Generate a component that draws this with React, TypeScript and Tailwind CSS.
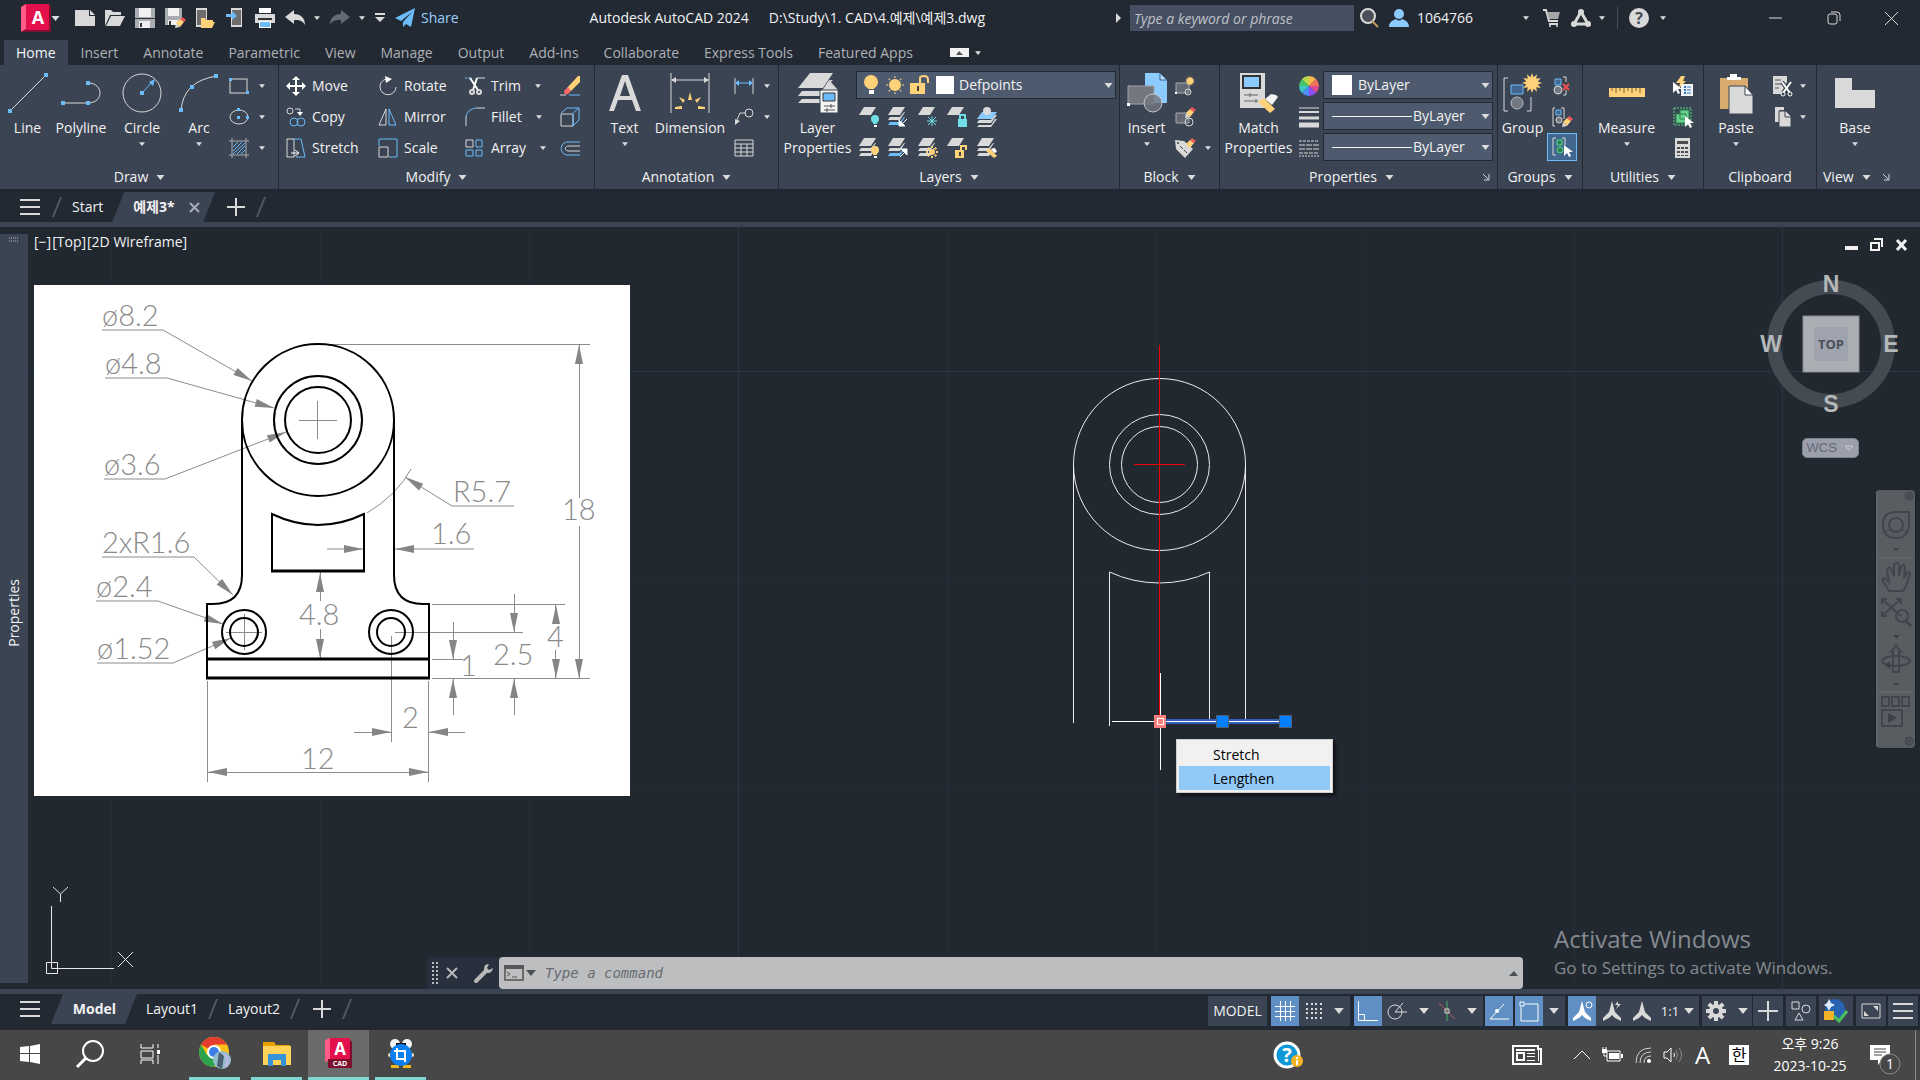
import React from "react";

type Kids = { children?: React.ReactNode };

function Svg({ w = 20, h = 20, vb, children, className = "" }: Kids & { w?: number; h?: number; vb?: string; className?: string }) {
  return (
    <svg width={w} height={h} viewBox={vb ?? `0 0 ${w} ${h}`} fill="none" aria-hidden="true" className={`shrink-0 overflow-visible ${className}`}>
      {children}
    </svg>
  );
}

function Caret({ w = 7, h = 4, className = "" }: { w?: number; h?: number; className?: string }) {
  return (
    <Svg w={w} h={h} vb="0 0 8 5" className={className}>
      <path d="M0 0H8L4 5Z" fill="#dcdcdc" />
    </Svg>
  );
}

const L = "#d9d9d9";
const B = "#6cbcfa";
const Y = "#ffd27a";

/* ---------- shared icon fragments ---------- */

const Sheet = ({ x, y, fill = L }: { x: number; y: number; fill?: string }) => (
  <path d={`M${x + 5} ${y}h12l-5 8H${x}z`} fill={fill} />
);

const SmallStack = ({ mid = L, low = L }: { mid?: string; low?: string }) => (
  <>
    <Sheet x={0} y={0} />
    <path d="M2 10L0 13H12L17 5H16L12 10Z" fill={mid} />
    <path d="M2 15L0 18H12L17 10H16L12 15Z" fill={low} />
  </>
);

const Bulb = ({ x, y, fill }: { x: number; y: number; fill: string }) => (
  <>
    <circle cx={x} cy={y} r="4" fill={fill} />
    <path d={`M${x - 2} ${y + 3}h4v2h-4z`} fill={fill} />
    <path d={`M${x - 1} ${y + 6}h3v2h-3z`} fill="#fff" />
  </>
);

const Pencil = ({ x, y }: { x: number; y: number }) => (
  <>
    <path d={`M${x - 1} ${y + 10}l1-5 4 4z`} fill={L} />
    <path d={`M${x} ${y + 5}l4-4 4 3-4 5z`} fill={Y} />
    <path d={`M${x + 4} ${y + 1}l2-2 4 3-2 2z`} fill="#f25b5b" />
  </>
);

const Cursor = ({ x, y }: { x: number; y: number }) => (
  <path d={`M${x} ${y}v11l3-3 2 4 2-1-2-4h4z`} fill="#fff" />
);

const Sun = ({ x, y, r, s }: { x: number; y: number; r: number; s: number }) => (
  <g stroke={Y} strokeWidth={r > 4 ? 1 : 2}>
    <circle cx={x} cy={y} r={r} fill={Y} stroke="none" />
    {[0, 45, 90, 135, 180, 225, 270, 315].map((a) => (
      <path key={a} d={`M${x} ${y - r - 1}v${-s}`} transform={`rotate(${a} ${x} ${y})`} />
    ))}
  </g>
);

const starPath =
  "M" +
  Array.from({ length: 24 }, (_, i) => {
    const r = i % 2 ? 6 : 10;
    const a = (i * Math.PI) / 12;
    return `${(r * Math.sin(a)).toFixed(1)} ${(-r * Math.cos(a)).toFixed(1)}`;
  }).join("L") +
  "Z";

const Star = ({ x, y, k }: { x: number; y: number; k: number }) => (
  <path transform={`translate(${x} ${y}) scale(${k})`} d={starPath} fill={Y} />
);

const Dot = ({ x, y }: { x: number; y: number }) => <rect x={x - 2} y={y - 2} width="4" height="4" fill={B} />;

/* ---------- title bar ---------- */

function IconButton({ label, className = "", children }: Kids & { label: string; className?: string }) {
  return (
    <button type="button" aria-label={label} className={`flex shrink-0 items-center justify-center ${className}`}>
      {children}
    </button>
  );
}

function TitleBar() {
  return (
    <header className="flex h-10 items-start">
      <div className="flex h-9 items-center pl-[18px] text-[#9bd0fb]">
        <IconButton label="Application menu" className="w-[44px] justify-between">
          <Svg w={30} h={28}>
            <path d="M0 3L5 0V26L0 28Z" fill="#ff5b86" />
            <path d="M5 0H28V26H5Z" fill="#e3104c" />
            <path d="M5 26H28V1L30 2V28H0L5 25Z" fill="#7c1131" />
            <text x="17" y="20" textAnchor="middle" fontSize="18" fontWeight="700" fill="#fff" fontFamily="Open Sans, sans-serif">A</text>
          </Svg>
          <Caret w={9} h={5} />
        </IconButton>
        <div className="ml-[13px] flex items-center gap-[10px]">
          <IconButton label="New"><Svg><path d="M0 2H14V8H20V18H0Z" fill={L} /><path d="M15 2L20 7H15Z" fill={L} /></Svg></IconButton>
          <IconButton label="Open"><Svg><path d="M0 18V2H6L8 4H16V7H5Z" fill={L} /><path d="M6 8H20L15 18H1Z" fill={L} /></Svg></IconButton>
          <IconButton label="Save"><Svg><path d="M0 0H20V20H0Z" fill="#a9acb0" /><path d="M4 0H16V9H4ZM4 13H15V20H4Z" fill="#f1f1f1" /><path d="M5 15h2v4H5zM0 10h20v1H0z" fill="#333" /></Svg></IconButton>
          <IconButton label="Save as"><Svg><path d="M0 0H17V17H0Z" fill="#a9acb0" /><path d="M3 0H14V8H3ZM3 12H13V17H3Z" fill="#f1f1f1" /><path d="M4 13h2v4H4z" fill="#333" /><Pencil x={11} y={10} /></Svg></IconButton>
          <IconButton label="Open from mobile"><Svg><path d="M1 0H12V19H1Z" fill={L} /><path d="M2 2H11V17H2Z" fill="#6d6d6d" /><path d="M6 10H10L11 12H18V14H20L17 20H6Z" fill={Y} /></Svg></IconButton>
          <IconButton label="Save to mobile"><Svg><path d="M6 0H17V19H6Z" fill={L} /><path d="M7 2H16V17H7Z" fill="#6d6d6d" /><path d="M1 6H7V3L12 8 7 12V9H1Z" fill={B} /></Svg></IconButton>
          <IconButton label="Plot"><Svg><path d="M4 0H16V5H4Z" fill="#fff" /><path d="M0 6H20V15H0Z" fill={L} /><path d="M3 10H17V12H3Z" fill="#333" /><path d="M4 13H16V20H4Z" fill="#fff" /><path d="M5 14H15V19H5Z" fill="#6cbcfa" /></Svg></IconButton>
          <IconButton label="Undo"><Svg><path d="M0 9L9 2V6C16 6 20 10 20 17 17 12 14 12 9 12V16Z" fill={L} /></Svg></IconButton>
        </div>
        <Caret w={6} className="ml-[9px]" />
        <IconButton label="Redo" className="ml-[10px]"><Svg><path d="M20 9L11 2V6C4 6 0 10 0 17 3 12 6 12 11 12V16Z" fill="#636a75" /></Svg></IconButton>
        <Caret w={6} className="ml-[9px]" />
        <IconButton label="Customize" className="ml-[10px]"><Svg w={10} h={10}><path d="M0 0H10V2H0ZM0 4H10L5 9Z" fill={L} /></Svg></IconButton>
        <button type="button" className="ml-[10px] flex items-center gap-[6px] text-sm">
          <Svg><path d="M20 0L0 10 6 13 17 4 8 14V19L11 16 16 19Z" fill={B} /></Svg>
          Share
        </button>
      </div>
      <h1 className="flex-1 text-center text-sm leading-9 text-[#f2f2f2]">
        Autodesk AutoCAD 2024<span className="inline-block w-5" />D:\Study\1. CAD\4.예제\예제3.dwg
      </h1>
      <div className="flex h-9 items-center pr-[22px] text-[#f2f2f2]">
        <Svg w={5} h={10}><path d="M0 0L5 5 0 10Z" fill={L} /></Svg>
        <input
          aria-label="Search"
          placeholder="Type a keyword or phrase"
          className="ml-[9px] h-[26px] w-56 bg-[#464e61] px-1 text-sm italic placeholder:text-[#bfc2c8]"
        />
        <IconButton label="Find" className="ml-[5px]"><Svg><circle cx="9" cy="8" r="7" fill="#4a5059" stroke={L} strokeWidth="2" /><path d="M13 13L19 19" stroke="#c59a63" strokeWidth="2" /></Svg></IconButton>
        <button type="button" className="ml-[10px] flex items-center gap-2 text-sm">
          <Svg><circle cx="10" cy="6" r="5" fill="#8ccbff" /><path d="M0 19C0 14 4 12 7 11 9 13 11 13 13 11 16 12 20 14 20 19Z" fill="#8ccbff" /></Svg>
          <span className="w-[98px] text-left">1064766</span>
          <Caret w={6} />
        </button>
        <IconButton label="App store" className="ml-[14px]"><Svg w={18} h={18}><path d="M0 1H3L6 12H15M6 15H15" stroke={L} strokeWidth="2" /><path d="M4 3H17L15 10H6Z" fill="#a5a5a5" /><circle cx="7" cy="17" r="1" fill={L} /><circle cx="14" cy="17" r="1" fill={L} /></Svg></IconButton>
        <IconButton label="Autodesk account" className="ml-[10px]"><Svg><path d="M10 4L3 16H17Z" stroke={L} strokeWidth="3" /><circle cx="10" cy="4" r="3" fill={L} /><circle cx="3" cy="16" r="3" fill={L} /><circle cx="17" cy="16" r="3" fill={L} /></Svg></IconButton>
        <Caret w={6} className="ml-2" />
        <span className="ml-[12px] h-[22px] w-px bg-[#474f5e]" />
        <IconButton label="Help" className="ml-[11px]">
          <Svg w={21} h={20}><circle cx="10" cy="10" r="10" fill={L} /><text x="10" y="16" textAnchor="middle" fontSize="16" fontWeight="700" fill="#454b55" fontFamily="Open Sans, sans-serif">?</text></Svg>
        </IconButton>
        <Caret w={6} className="ml-[10px]" />
        <IconButton label="Minimize" className="ml-[103px]"><Svg w={13} h={13}><path d="M0 6H13" stroke={L} /></Svg></IconButton>
        <IconButton label="Restore" className="ml-[45px]"><Svg w={14} h={14}><rect x="1" y="3" width="9" height="10" rx="2" stroke={L} /><path d="M4 1H10Q13 1 13 4V10" stroke={L} /></Svg></IconButton>
        <IconButton label="Close" className="ml-[44px]"><Svg w={13} h={13}><path d="M0 0L13 13M13 0L0 13" stroke={L} /></Svg></IconButton>
      </div>
    </header>
  );
}

const ribbonTabs = ["Home", "Insert", "Annotate", "Parametric", "View", "Manage", "Output", "Add-ins", "Collaborate", "Express Tools", "Featured Apps"];

function RibbonTabs() {
  return (
    <nav className="flex h-[25px] items-stretch gap-px pl-1 text-sm text-[#aeb1b6]">
      {ribbonTabs.map((t, i) => (
        <button key={t} type="button" className={i === 0 ? "bg-[#3b4453] px-3 text-[#f5f5f5]" : "px-3"}>
          {t}
        </button>
      ))}
      <button type="button" aria-label="Ribbon display" className="ml-[24px] flex items-center gap-[6px]">
        <Svg w={19} h={9}><path d="M0 0H19V9H0Z" fill="#f2f2f2" /><path d="M6 7L9 3 13 7Z" fill="#555" /></Svg>
        <Caret w={6} />
      </button>
    </nav>
  );
}

/* ---------- ribbon ---------- */

function Panel({ label, width, caret = true, corner = false, last = false, children }: Kids & { label: string; width: string; caret?: boolean; corner?: boolean; last?: boolean }) {
  return (
    <section className={`flex flex-col ${width} ${last ? "" : "border-r border-[#222933]"}`}>
      <div className="flex h-[100px] pt-[5px]">{children}</div>
      <div className="flex h-6 items-center">
        <button type="button" className={`flex items-center gap-2 ${last ? "pl-[6px]" : "flex-1 justify-center"}`}>
          {label}
          {caret && <Caret w={9} h={5} />}
        </button>
        {corner && (
          <IconButton label={`${label} settings`} className={last ? "ml-3" : "mr-[7px]"}>
            <Svg w={7} h={7}><path d="M0 0L5 5M6 0V6H1" stroke={L} strokeWidth="1" /></Svg>
          </IconButton>
        )}
      </div>
    </section>
  );
}

function Big({ label, width, caret = false, children }: Kids & { label: string; width: string; caret?: boolean }) {
  return (
    <button type="button" className={`flex shrink-0 flex-col items-center pt-[3px] leading-5 ${width}`}>
      <Svg w={40} h={40}>{children}</Svg>
      <span className="mt-[5px] whitespace-pre">{label}</span>
      {caret && <Caret w={6} className="mt-1" />}
    </button>
  );
}

function Tool({ label, caret = false, gap = "gap-[6px]", children }: Kids & { label?: string; caret?: boolean; gap?: string }) {
  return (
    <div className={`flex h-[31px] items-center ${gap}`}>
      <button type="button" aria-label={label ?? "Tool"} className="shrink-0">
        <Svg>{children}</Svg>
      </button>
      {caret && <Caret w={6} />}
    </div>
  );
}

function TextTool({ label, caret = false, children }: Kids & { label: string; caret?: boolean }) {
  return (
    <button type="button" className="flex h-[31px] items-center gap-[6px]">
      <Svg>{children}</Svg>
      {label}
      {caret && <Caret w={6} className="ml-2" />}
    </button>
  );
}

function DrawPanel() {
  return (
    <Panel label="Draw" width="w-[278px]">
      <Big label="Line" width="w-[53px]"><path d="M2 38L38 2" stroke={L} /><Dot x={2} y={38} /><Dot x={38} y={2} /></Big>
      <Big label="Polyline" width="w-[54px]"><path d="M2 30H27M27 10C43 10 43 30 27 30" stroke={L} /><Dot x={2} y={30} /><Dot x={27} y={30} /><Dot x={27} y={10} /></Big>
      <Big label="Circle" width="w-[68px]" caret><circle cx="20" cy="20" r="19" stroke={L} /><path d="M20 20L30 9" stroke={B} /><path d="M33 6L27 9 31 13Z" fill={B} /><Dot x={20} y={20} /></Big>
      <Big label="Arc" width="w-[46px]" caret><path d="M2 38Q4 8 38 3" stroke={L} /><Dot x={2} y={37} /><Dot x={13} y={14} /><Dot x={37} y={3} /></Big>
      <div className="ml-[7px]">
        <Tool label="Rectangle" caret gap="gap-[10px]"><rect x="1" y="3" width="17" height="14" stroke={L} /><rect x="0" y="2" width="3" height="3" fill={B} /><rect x="17" y="15" width="3" height="3" fill={B} /></Tool>
        <Tool label="Ellipse" caret gap="gap-[10px]"><ellipse cx="10" cy="10" rx="9" ry="7" stroke={L} /><rect x="8" y="9" width="3" height="3" fill={B} /><rect x="8" y="1" width="3" height="3" fill={B} /><rect x="17" y="9" width="3" height="3" fill={B} /></Tool>
        <Tool label="Hatch" caret gap="gap-[10px]"><path d="M0 3H20M0 17H20M3 0V20M17 0V20" stroke="#a7abb2" /><path d="M4 9L9 4M4 13L13 4M4 16L16 5M8 16L16 8M12 16L16 12" stroke={B} /></Tool>
      </div>
    </Panel>
  );
}

function ModifyPanel() {
  return (
    <Panel label="Modify" width="w-[316px]">
      <div className="ml-[7px] w-[92px]">
        <TextTool label="Move"><path d="M10 0L14 4H11V9H16V6L20 10 16 14V11H11V16H14L10 20 6 16H9V11H4V14L0 10 4 6V9H9V4H6Z" fill="#fff" /></TextTool>
        <TextTool label="Copy"><circle cx="4" cy="4" r="3" stroke={L} /><path d="M9 2H14V6" stroke={L} /><path d="M11 5H17L14 9Z" fill="#fff" /><circle cx="8" cy="15" r="4" stroke={B} /><circle cx="15" cy="15" r="4" stroke={B} /></TextTool>
        <TextTool label="Stretch"><path d="M1 1H8V19H1Z" stroke={L} /><path d="M8 1H15L19 19H10" stroke={B} /><path d="M5 15H12M9 12L13 15 9 18" stroke="#fff" /></TextTool>
      </div>
      <div className="w-[87px]">
        <TextTool label="Rotate"><path d="M8 3A8 8 0 1 0 18 11" stroke={L} /><path d="M7 0L14 3 8 7Z" fill="#fff" /></TextTool>
        <TextTool label="Mirror"><path d="M8 2V18H1Z" stroke={L} /><path d="M11 2V18H18Z" stroke={B} /></TextTool>
        <TextTool label="Scale"><path d="M1 8V1H19V19H11" stroke={B} /><path d="M1 9H10V19H1Z" stroke={L} /></TextTool>
      </div>
      <div className="w-[95px]">
        <TextTool label="Trim" caret><path d="M0 2H7" stroke={B} strokeDasharray="2 1" /><path d="M12 2H20" stroke={L} /><path d="M5 2L13 14M12 2L8 14" stroke="#fff" strokeWidth="2" /><circle cx="7" cy="16" r="2" stroke={L} strokeWidth="2" /><circle cx="14" cy="16" r="2" stroke={L} strokeWidth="2" /></TextTool>
        <TextTool label="Fillet" caret><path d="M1 19V9M11 1H20" stroke={L} /><path d="M1 10Q2 2 11 1" stroke={B} /></TextTool>
        <TextTool label="Array" caret><path d="M1 2H8V9H1Z" stroke={L} /><path d="M11 2H17V9H11ZM1 12H8V18H1ZM11 12H17V18H11Z" stroke={B} /></TextTool>
      </div>
      <div>
        <Tool label="Erase"><path d="M0 19H6" stroke={L} /><path d="M9 19H20" stroke={B} /><path d="M7 12L18 0H20V6L11 15Z" fill={Y} /><path d="M4 15L8 11 11 15 8 18Q4 19 4 15Z" fill="#ff6b6b" /></Tool>
        <Tool label="Explode"><path d="M1 7H13V19H1Z" stroke={L} /><path d="M1 6L7 1H19L13 6M19 1V13L13 19M13 7V19" stroke={B} /></Tool>
        <Tool label="Offset"><path d="M20 4H8C-1 4-1 17 8 17H20" stroke={B} /><path d="M20 8H9C4 8 4 13 9 13H20" stroke={L} /></Tool>
      </div>
    </Panel>
  );
}

function AnnotationPanel() {
  return (
    <Panel label="Annotation" width="w-[184px]">
      <Big label="Text" width="w-[59px]" caret><path d="M17 2H23L36 38H31L27 27H13L9 38H4ZM20 8L15 23H25Z" fill={L} /></Big>
      <Big label="Dimension" width="w-[72px]"><path d="M1 0V40M39 0V40M2 7H38" stroke={L} /><path d="M1 7L6 4V10ZM39 7L34 4V10Z" fill={L} /><g fill={Y}><path d="M18 27L20 19 22 27Z" /><path d="M9 24L15 27 13 30Z" /><path d="M31 24L25 27 27 30Z" /><path d="M5 34L12 33V36H5Z" /><path d="M35 34L28 33V36H35Z" /></g></Big>
      <div className="ml-2">
        <Tool label="Linear" caret gap="gap-[10px]"><path d="M1 2V18M19 2V18" stroke={L} /><path d="M2 7H18" stroke={B} /><path d="M1 7L5 4V10ZM19 7L15 4V10Z" fill={B} /></Tool>
        <Tool label="Leader" caret gap="gap-[10px]"><path d="M2 15L6 6H12" stroke={L} /><circle cx="15" cy="6" r="4" stroke={L} /><path d="M1 18L1 12 6 14Z" fill={L} /></Tool>
        <Tool label="Table"><path d="M1 2H19V18H1ZM1 6H19M1 10H19M1 14H19M7 6V18M13 6V18" stroke={L} /></Tool>
      </div>
    </Panel>
  );
}

function SelectCaret() {
  return <Caret w={9} h={5} className="pointer-events-none mr-[2px]" />;
}

const layerTools: { label: string; art: React.ReactNode }[] = [
  { label: "Off", art: <><Sheet x={0} y={0} /><Bulb x={16} y={12} fill="#6fdfe6" /></> },
  { label: "Isolate", art: <><SmallStack low={B} /><path d="M19 12L13 18M11 13V19H17Z" stroke="#fff" fill="#fff" /></> },
  { label: "Freeze", art: <><Sheet x={0} y={0} /><path d="M14 9V19M9 14H19M10 10L18 18M18 10L10 18" stroke="#6fdfe6" /></> },
  { label: "Lock", art: <><Sheet x={0} y={0} /><path d="M11 12H20V20H11Z" fill="#6fdfe6" /><path d="M13 12V8H18V12" stroke="#6fdfe6" strokeWidth="2" /></> },
  { label: "Make current", art: <><path d="M5 5H20L15 12H0Z" fill="#8ccbff" /><circle cx="10" cy="4" r="4" fill={L} /><path d="M2 13L0 16H14L20 8H18L14 13ZM2 18L0 20H14L20 12H18L14 18Z" fill={L} /></> },
  { label: "Turn all on", art: <><SmallStack /><Bulb x={16} y={12} fill={Y} /></> },
  { label: "Unisolate", art: <><SmallStack low={B} /><path d="M12 19L18 13M13 11H19V17Z" stroke="#fff" fill="#fff" /></> },
  { label: "Thaw", art: <><SmallStack /><Sun x={14} y={14} r={3} s={2} /></> },
  { label: "Unlock", art: <><Sheet x={0} y={0} /><path d="M8 12H17V20H8Z" fill={Y} /><path d="M14 12V8H19V12" stroke={Y} strokeWidth="2" /><path d="M12 14H14V18H12Z" fill="#444" /></> },
  { label: "Match layer", art: <><SmallStack /><path d="M9 13L12 10 20 18 17 20Z" fill={Y} /><path d="M14 11L18 10 20 14 17 15Z" fill="#fff" /></> },
];

function LayersPanel() {
  return (
    <Panel label="Layers" width="w-[341px]">
      <Big label={"Layer\nProperties"} width="w-[77px]">
        <path d="M12 0H35L25 15H0Z" fill={L} /><path d="M4 18L0 23H23L25 17H40L31 7 24 18ZM4 26L0 30H23V26Z" fill={L} />
        <path d="M24 17L35 7H32L24 18Z" fill={L} />
        <path d="M22 17H40V40H22Z" fill="#f4f4f4" stroke="#3b4453" /><path d="M25 20H37V28H25Z" fill="#6cbcfa" stroke="#333" /><path d="M26 33H37M26 37H37M33 31V35M29 35V39" stroke="#555" />
      </Big>
      <div className="flex-1 pr-[3px]">
        <div className="mt-[1px] flex h-7 items-center border border-[#222933] bg-[#4e5b6f]">
          <Svg w={100} h={22} className="ml-[7px]">
            <circle cx="7" cy="8" r="7" fill={Y} /><path d="M4 12H10V15H4Z" fill={Y} /><path d="M5 16H10V20H5Z" fill="#fff" />
            <Sun x={31} y={11} r={6} s={2} />
            <path d="M46 9H61V20H46Z" fill={Y} /><path d="M56 9V4Q56 2 60 2 64 2 64 6V9" stroke={Y} strokeWidth="2" /><path d="M53 12H55V17H53Z" fill="#444" />
            <path d="M72 2H90V20H72Z" fill="#fff" />
          </Svg>
          <select aria-label="Layer" className="-ml-[5px] flex-1 appearance-none bg-transparent"><option>Defpoints</option></select>
          <SelectCaret />
        </div>
        <div className="mt-[2px] grid w-[150px] grid-cols-5 pl-[3px]">
          {layerTools.map((t) => <Tool key={t.label} label={t.label}>{t.art}</Tool>)}
        </div>
      </div>
    </Panel>
  );
}

function BlockPanel() {
  return (
    <Panel label="Block" width="w-[100px]">
      <Big label="Insert" width="w-[53px]" caret>
        <path d="M18 0H33L40 7V30H18Z" fill="#8ccbff" /><path d="M33 0V7H40Z" fill="#b9dfff" stroke="#3b5f86" /><path d="M1 13H27V31H1Z" fill="#737780" stroke="#9fa3aa" /><circle cx="26" cy="30" r="9" fill="#737780" fillOpacity="0.8" stroke="#c6c8cc" /><path d="M0 30H3V33H0Z" fill="#fff" />
      </Big>
      <div className="ml-[2px]">
        <Tool label="Create block"><path d="M1 7H14V17H1Z" fill="#646973" stroke="#a7abb2" /><circle cx="13" cy="16" r="3" stroke={L} /><Star x={15} y={5} k={0.5} /><path d="M0 16H2V18H0Z" fill="#fff" /></Tool>
        <Tool label="Edit block"><path d="M1 6H14V16H1Z" fill="#646973" stroke="#a7abb2" /><circle cx="14" cy="15" r="4" stroke={L} /><Pencil x={11} y={1} /></Tool>
        <Tool label="Edit attributes" caret gap="gap-[10px]"><path d="M0 2L9 3 18 11 10 20 1 11Z" fill={L} /><path d="M5 8L8 11M9 12L12 15" stroke="#444" /><circle cx="3" cy="5" r="1" fill="#444" /><Pencil x={11} y={1} /></Tool>
      </div>
    </Panel>
  );
}

function PropertySelect({ label, swatch = false }: { label: string; swatch?: boolean }) {
  return (
    <div className="flex h-7 items-center border border-[#222933] bg-[#4e5b6f]">
      {swatch ? <span className="mx-[6px] ml-2 size-5 bg-white" /> : <span className="ml-2 h-px w-20 bg-[#f2f2f2]" />}
      <select aria-label={label} className={swatch ? "min-w-0 flex-1 appearance-none bg-transparent" : "ml-px min-w-0 flex-1 appearance-none bg-transparent"}>
        <option>ByLayer</option>
      </select>
      <SelectCaret />
    </div>
  );
}

function PropertiesPanel() {
  return (
    <Panel label="Properties" width="w-[278px]" corner>
      <Big label={"Match\nProperties"} width="w-[77px]">
        <path d="M1 0H26V35H1Z" fill={L} /><path d="M4 3H21V15H4Z" fill="#8ccbff" stroke="#333" strokeWidth="2" /><path d="M5 22H19M5 28H19M11 20V24M17 26V30" stroke="#666" />
        <path d="M19 29L25 25 36 36 31 40Z" fill={Y} /><path d="M26 26L32 21 37 22 39 24 33 32Z" fill="#f4f4f4" />
      </Big>
      <div className="ml-[2px] w-[24px]">
        <Tool label="Object color">
          <g transform="translate(10 10)">
            {["#ffb84d", "#f2735d", "#e14b8f", "#8c4df5", "#4d8ef5", "#3fc6c6", "#46c46b", "#b8d94a"].map((c, i) => (
              <path key={c} d="M0 0V-10A10 10 0 0 1 7-7Z" fill={c} transform={`rotate(${i * 45})`} />
            ))}
          </g>
        </Tool>
        <Tool label="Lineweight"><path d="M0 1H20" stroke={L} /><path d="M0 5H20" stroke={L} strokeWidth="2" /><path d="M0 11H20" stroke={L} strokeWidth="3" /><path d="M0 18H20" stroke={L} strokeWidth="5" /></Tool>
        <Tool label="Linetype"><path d="M0 3H20" stroke={L} strokeDasharray="3 1" /><path d="M0 7H20M0 11H20" stroke={L} strokeDasharray="6 1" /><path d="M0 15H20" stroke={L} strokeDasharray="4 1" /><path d="M0 18H20" stroke={L} strokeDasharray="2 1" /></Tool>
      </div>
      <div className="flex flex-1 flex-col gap-[3px] pr-[4px] pt-[1px]">
        <PropertySelect label="Color" swatch />
        <PropertySelect label="Lineweight" />
        <PropertySelect label="Linetype" />
      </div>
    </Panel>
  );
}

function GroupsPanel() {
  return (
    <Panel label="Groups" width="w-[85px]">
      <Big label="Group" width="w-[49px]">
        <path d="M5 5H1V38H5M24 38H28V24" stroke={L} /><path d="M8 12H20V21H8Z" fill="#42678f" stroke={B} /><circle cx="14" cy="30" r="6" fill="#737780" stroke="#b9bcc2" /><Star x={29} y={10} k={1} />
      </Big>
      <div>
        <div className="flex h-[31px] w-[30px] items-center justify-center"><Tool label="Ungroup"><path d="M3 3H9V9H3Z" fill="#42678f" stroke={B} /><circle cx="6" cy="14" r="4" fill="#737780" stroke={L} /><path d="M11 1H14V6M14 14V19H11" stroke={L} /><path d="M11 8L17 14M17 8L11 14" stroke="#f25050" strokeWidth="2" /></Tool></div>
        <div className="flex h-[31px] w-[30px] items-center justify-center"><Tool label="Group edit"><path d="M3 1H1V19H3M9 1H12V12" stroke={L} /><path d="M4 3H9V8H4Z" fill="#42678f" stroke={B} /><circle cx="7" cy="13" r="3" fill="#737780" stroke={L} /><Pencil x={11} y={10} /></Tool></div>
        <div className="mt-px flex h-7 w-[30px] items-center justify-center border border-[#6cbcfa] bg-[#42678f]"><Tool label="Group selection"><path d="M4 1H1V18H4M10 1H13V8" stroke={L} /><path d="M5 3H10V8H5Z" fill="#2f8254" stroke="#57d486" /><circle cx="8" cy="13" r="3" fill="#2f8254" stroke="#57d486" /><Cursor x={12} y={8} /></Tool></div>
      </div>
    </Panel>
  );
}

function UtilitiesPanel() {
  return (
    <Panel label="Utilities" width="w-[121px]">
      <Big label="Measure" width="w-[87px]" caret><path d="M2 15H38V24H2Z" fill={Y} /><path d="M5 15V18M9 15V20M13 15V18M17 15V20M21 15V18M25 15V20M29 15V18M33 15V20" stroke="#7d6130" /></Big>
      <div className="ml-[3px]">
        <Tool label="Quick select"><path d="M8 0H12L10 5H13L6 12 7 7H3Z" fill={Y} /><path d="M8 8H20V20H8Z" fill="#f4f4f4" /><path d="M11 11H13M11 14H13M11 17H13" stroke="#2776c9" strokeWidth="2" /><path d="M14 11H18M14 14H18M14 17H18" stroke="#2776c9" /><Cursor x={0} y={6} /></Tool>
        <Tool label="Select all"><path d="M1 1H18V18H1Z" stroke="#57d486" strokeDasharray="2 1" /><path d="M7 3H16V12H7ZM3 7H13V16H3Z" fill="#65cf8c" stroke="#2f8254" /><Cursor x={12} y={9} /></Tool>
        <Tool label="Calculator"><path d="M2 0H17V20H2Z" fill={L} /><path d="M4 3H15V6H4Z" fill="#4c4c4c" /><path d="M4 9H7V11H4ZM8 9H11V11H8ZM12 9H15V11H12ZM4 13H7V15H4ZM8 13H11V15H8ZM12 13H15V15H12ZM4 17H7V18H4ZM8 17H11V18H8ZM12 17H15V18H12Z" fill="#4c4c4c" /></Tool>
      </div>
    </Panel>
  );
}

function ClipboardPanel() {
  return (
    <Panel label="Clipboard" width="w-[113px]" caret={false}>
      <Big label="Paste" width="w-[64px]" caret><path d="M4 5H32V36H4Z" fill="#d9ab6e" /><path d="M11 7V4H14V1H21V4H25V7Z" fill="#fff" /><path d="M13 13H29L37 22V41H13Z" fill={L} stroke="#3b4453" /><path d="M29 13V22H37Z" fill="#fff" stroke="#3b4453" /></Big>
      <div className="ml-1">
        <Tool label="Cut" caret gap="gap-2"><path d="M1 0H15V6L9 18H1Z" fill={L} /><path d="M3 4H9M3 8H9M3 12H7" stroke="#555" /><path d="M10 6L18 17M19 6L11 17" stroke="#3b4453" strokeWidth="4" /><path d="M10 6L18 17M19 6L11 17" stroke="#fff" strokeWidth="2" /><circle cx="11" cy="18" r="2" stroke="#fff" fill="#3b4453" /><circle cx="18" cy="18" r="2" stroke="#fff" fill="#3b4453" /></Tool>
        <Tool label="Copy clip" caret gap="gap-2"><path d="M3 0H12V3H7V15H3Z" fill={L} /><path d="M7 4H14L19 9V20H7Z" fill={L} stroke="#3b4453" /><path d="M13 4V10H19" stroke="#3b4453" /></Tool>
      </div>
    </Panel>
  );
}

function Ribbon() {
  return (
    <div className="flex h-[124px] bg-[#3b4453] pl-px text-sm text-[#f2f2f2]">
      <DrawPanel />
      <ModifyPanel />
      <AnnotationPanel />
      <LayersPanel />
      <BlockPanel />
      <PropertiesPanel />
      <GroupsPanel />
      <UtilitiesPanel />
      <ClipboardPanel />
      <Panel label="View" width="flex-1" corner last>
        <Big label="Base" width="w-[76px]" caret><path d="M0 5H17V17H40V35H0Z" fill={L} /></Big>
      </Panel>
    </div>
  );
}

/* ---------- document tabs ---------- */

const Slash = () => <Svg w={9} h={20}><path d="M0 20L8 0" stroke="#4e5765" strokeWidth="2" /></Svg>;
const Burger = () => <Svg w={20} h={16}><path d="M0 1H20M0 8H20M0 15H20" stroke={L} strokeWidth="2" /></Svg>;
const Plus = () => <Svg w={18} h={18}><path d="M9 0V18M0 9H18" stroke={L} strokeWidth="2" /></Svg>;

function FileTabs() {
  return (
    <nav className="flex h-[33px] items-end pl-5 text-sm text-[#f2f2f2]">
      <div className="flex h-[30px] items-center">
        <IconButton label="Tabs menu"><Burger /></IconButton>
        <span className="ml-[13px]"><Slash /></span>
        <button type="button" className="ml-[10px]">Start</button>
        <div className="ml-[9px] flex h-[30px] w-[103px] items-center bg-[#3b4453] pl-[21px] [clip-path:polygon(12px_0,100%_0,calc(100%-12px)_100%,0_100%)]">
          <button type="button" className="w-[56px] text-left font-bold">예제3*</button>
          <IconButton label="Close tab"><Svg w={11} h={11}><path d="M1 1L10 10M10 1L1 10" stroke="#a9adb5" strokeWidth="2" /></Svg></IconButton>
        </div>
        <IconButton label="New tab" className="ml-3"><Plus /></IconButton>
        <span className="ml-3"><Slash /></span>
      </div>
    </nav>
  );
}

/* ---------- drawing area ---------- */

function Arrow({ x, y, dx, dy }: { x: number; y: number; dx: number; dy: number }) {
  const a = (Math.atan2(dy, dx) * 180) / Math.PI;
  return <path d="M0 0L-19-4V4Z" transform={`translate(${x} ${y}) rotate(${a})`} fill="#858585" />;
}

const leaders: { t: string; x: number; y: number; x2: number; tip: [number, number] }[] = [
  { t: "ø8.2", x: 102, y: 330, x2: 163, tip: [252, 381] },
  { t: "ø4.8", x: 105, y: 378, x2: 167, tip: [274, 408] },
  { t: "ø3.6", x: 104, y: 479, x2: 165, tip: [286, 432] },
  { t: "2xR1.6", x: 102, y: 557, x2: 194, tip: [233, 595] },
  { t: "ø2.4", x: 96, y: 601, x2: 158, tip: [223, 624] },
  { t: "ø1.52", x: 97, y: 663, x2: 173, tip: [231, 638] },
];

const dims: [string, number, number][] = [
  ["R5.7", 453, 502], ["1.6", 431, 544], ["18", 562, 520], ["4.8", 299, 625], ["4", 547, 647],
  ["2.5", 493, 665], ["1", 460, 676], ["2", 402, 728], ["12", 301, 769],
];

const heads: [number, number, number, number][] = [
  [405, 477, -46, -29], [363, 549, 1, 0], [395, 549, -1, 0], [579, 345, 0, -1], [579, 678, 0, 1],
  [320, 573, 0, -1], [320, 658, 0, 1], [556, 605, 0, -1], [556, 678, 0, 1], [514, 632, 0, 1], [514, 679, 0, -1],
  [453, 659, 0, 1], [453, 679, 0, -1], [391, 732, 1, 0], [429, 732, -1, 0], [208, 772, -1, 0], [428, 772, 1, 0],
];

function ExerciseSheet() {
  return (
    <g>
      <rect x="34" y="285" width="596" height="511" fill="#fff" />
      <g stroke="#8c8c8c">
        {leaders.map((l) => <path key={l.t} d={`M${l.x} ${l.y}H${l.x2}L${l.tip[0]} ${l.tip[1]}`} />)}
        <path d="M514 506H452L405 477M367 513Q397 495 411 469M327 549H363M395 549H474" />
        <path d="M317 344.500H590M432 678.500H590M579.500 345V498M579.500 526V678M432 604.500H565M555.500 605V624M555.500 650V678" />
        <path d="M514.500 594V632M514.500 679V715M395 632.500H523M453.500 622V659M453.500 679V715M432 659.500H463" />
        <path d="M391.500 636V742M428.500 681V782M207.500 681V782M354 732.500H391M428 732.500H465M207 772.500H428" />
        <path d="M320.500 572V601M320.500 629V659M299 420.500H337M317.500 401V439M226 632.500H262M244.500 614V650" />
      </g>
      {leaders.map((l) => <Arrow key={l.t} x={l.tip[0]} y={l.tip[1]} dx={l.tip[0] - l.x2} dy={l.tip[1] - l.y} />)}
      {heads.map((h) => <Arrow key={h.join()} x={h[0]} y={h[1]} dx={h[2]} dy={h[3]} />)}
      <g fontFamily="Lato, sans-serif" fontWeight="300" fontSize="29" fill="#8a8a8a">
        {leaders.map((l) => <text key={l.t} x={l.x} y={l.y - 4}>{l.t}</text>)}
        {dims.map((d) => <text key={d[0]} x={d[1]} y={d[2]}>{d[0]}</text>)}
      </g>
      <g stroke="#000" strokeWidth="2">
        <circle cx="318" cy="420" r="76" /><circle cx="318" cy="420" r="44" /><circle cx="318" cy="420" r="33" />
        <path d="M242 420V575Q242 604 213 604H207V678H429V604H423Q394 604 394 575V420" />
        <path d="M272 571V514Q318 536 364 514V571" />
        <circle cx="244" cy="632" r="22" /><circle cx="244" cy="632" r="14" /><circle cx="391" cy="632" r="22" /><circle cx="391" cy="632" r="14" />
        <path d="M271 571H365M207 659H429M206 678H430" strokeWidth="3" />
      </g>
    </g>
  );
}

function ModelGeometry() {
  return (
    <g>
      <g stroke="#ececec">
        <circle cx="1159.500" cy="464.500" r="86" /><circle cx="1159.500" cy="464.500" r="50" /><circle cx="1159.500" cy="464.500" r="38" />
        <path d="M1073.500 464V723M1245.500 464V721M1109.500 726V572A119 119 0 0 0 1209.500 572V721" />
      </g>
      <path d="M1159.500 345V716M1134 464.500H1185" stroke="#f00000" />
      <path d="M1160 721.500H1280" stroke="#2f5fb8" strokeWidth="5" />
      <path d="M1160 721.500H1280M1112 721.500H1160M1160.500 673V770" stroke="#fff" />
      <rect x="1154" y="715" width="12" height="13" fill="#ff7f7f" />
      <rect x="1157.500" y="718.500" width="6" height="6" fill="#ff7f7f" stroke="#fff" />
      <rect x="1216.500" y="715.500" width="12" height="12" fill="#0080ff" stroke="#4d5f77" />
      <rect x="1279.500" y="715.500" width="12" height="12" fill="#0080ff" stroke="#4d5f77" />
    </g>
  );
}

function Canvas() {
  return (
    <svg viewBox="31 227 1889 762" preserveAspectRatio="xMinYMin slice" fill="none" className="absolute inset-0 size-full" aria-label="Drawing">
      <path d="M111.500 227V989M320.500 227V989M529.500 227V989M947.500 227V989M1156.500 227V989M1365.500 227V989M1574.500 227V989M31 580.500H1920M31 789.500H1920" stroke="#252d38" />
      <path d="M738.500 227V989M1782.500 227V989M31 371.500H1920" stroke="#2c3545" />
      <ExerciseSheet />
      <ModelGeometry />
      <g stroke="#e8e8e8">
        <path d="M51.500 906V968.500H114M46.500 962.500H57.500V973.500H46.500Z" />
        <path d="M53 887L60.500 894V902M68 887L60.500 894M118 952L133 967M133 952L118 967" />
      </g>
    </svg>
  );
}

function ViewCube() {
  return (
    <Svg w={140} h={140} vb="1760 274 140 140">
      <circle cx="1831" cy="344" r="57" stroke="#444b53" strokeWidth="14" />
      <rect x="1803" y="316" width="56" height="56" fill="#abafb3" stroke="#868a8e" />
      <rect x="1814" y="327" width="34" height="34" fill="#9ea3ad" />
      <g fontFamily="Liberation Sans, sans-serif" fontWeight="700" fill="#b5b7b9" textAnchor="middle">
        <text x="1831" y="292" fontSize="23">N</text>
        <text x="1831" y="412" fontSize="23">S</text>
        <text x="1771" y="352" fontSize="23">W</text>
        <text x="1891" y="352" fontSize="23">E</text>
        <text x="1831" y="349" fontSize="13" fill="#4b5058" fontFamily="Open Sans, sans-serif">TOP</text>
      </g>
    </Svg>
  );
}

function NavBar() {
  return (
    <Svg w={41} h={260}>
      <rect x="0.500" y="0.500" width="40" height="259" rx="4" fill="#585d61" stroke="#1b2026" />
      <path d="M2 2V258M4 69H38M4 203H38" stroke="#6b7074" />
      <g stroke="#41464d" fill="none">
        <circle cx="34" cy="7" r="4" fill="#4c5156" /><path d="M32 5L36 9M36 5L32 9" />
        <path d="M8 36Q8 23 21 23H34V36Q33 49 21 49 8 49 8 36Z" strokeWidth="2" /><circle cx="21" cy="36" r="7" strokeWidth="2" /><path d="M10 43L15 41M32 43L27 41" />
        <path d="M14 102L8 92Q6 87 11 90L14 93 12 81Q14 76 17 82L19 87 19 76Q22 72 24 76V87L26 78Q29 73 30 79L29 89 32 84Q35 82 35 85L31 97 28 102Z" strokeWidth="2" />
        <path d="M7 110L26 127M26 110L7 127M7 115V110H12M21 110H26V115M7 122V127H12" strokeWidth="2" /><circle cx="27" cy="127" r="6" strokeWidth="2" /><path d="M31 132L36 137" strokeWidth="3" />
        <path d="M18 183V163H16L21 156 26 163H24V183Z" strokeWidth="2" /><ellipse cx="21" cy="172" rx="14" ry="5" strokeWidth="2" />
        <path d="M7 208H14V217H7ZM17 208H24V217H17ZM27 208H34V217H27ZM7 221H27V237H7Z" strokeWidth="2" />
        <circle cx="34" cy="252" r="4" fill="#4c5156" /><path d="M32 252H36" />
      </g>
      <path d="M18 59H25L21 62ZM18 146H25L21 150ZM18 194H25L21 197ZM13 224L22 229 13 234ZM15 172L10 176 15 180Z" fill="#3c4147" />
    </Svg>
  );
}

function Workspace() {
  return (
    <main className="flex min-h-0 flex-1 bg-[#222933]">
      <aside className="mb-[6px] mt-[7px] flex w-7 flex-col items-center bg-[#3b4453] text-sm text-[#f2f2f2]">
        <Svg w={10} h={5} className="mt-[3px]"><path d="M0 1H10M0 4H10" stroke="#b5b9c0" strokeDasharray="1 1" /></Svg>
        <div className="flex flex-1 items-center">
          <span className="rotate-180 leading-5 [writing-mode:vertical-rl]">Properties</span>
        </div>
      </aside>
      <div className="relative ml-[3px] min-w-0 flex-1 overflow-hidden bg-[#212830]">
        <Canvas />
        <div className="absolute left-[3px] top-[5px] flex gap-px text-sm leading-5 text-[#f2f2f2]">
          <button type="button">[−]</button><button type="button">[Top]</button><button type="button">[2D Wireframe]</button>
        </div>
        <div className="absolute right-[12px] top-[11px] flex gap-3">
          <IconButton label="Minimize drawing"><Svg w={13} h={13}><path d="M0 8H13V12H0Z" fill="#f2f2f2" /></Svg></IconButton>
          <IconButton label="Restore drawing"><Svg w={13} h={13}><path d="M1 5H9V12H1Z" stroke="#f2f2f2" strokeWidth="2" /><path d="M4 1H12V9" stroke="#f2f2f2" strokeWidth="2" /></Svg></IconButton>
          <IconButton label="Close drawing"><Svg w={13} h={13}><path d="M2 2L11 12M11 2L2 12" stroke="#f2f2f2" strokeWidth="3" /></Svg></IconButton>
        </div>
        <div className="absolute right-[20px] top-[47px] flex w-[140px] flex-col items-center">
          <ViewCube />
          <button type="button" className="mt-6 flex h-5 w-[57px] items-center justify-between rounded-[5px] border border-[#7d808d] bg-[#9c9fac] px-1 font-['Liberation_Sans'] text-[13px] leading-4 text-[#666a75]">
            WCS
            <Svg w={10} h={6}><path d="M1 1H9L5 5Z" stroke="#c9cbd2" /></Svg>
          </button>
        </div>
        <div className="absolute right-[4px] top-[262px]"><NavBar /></div>
        <ul role="menu" className="absolute left-[1145px] top-[512px] w-[157px] border border-[#cfcfcf] bg-[#f1f1f1] p-[2px] text-sm text-black shadow-[3px_3px_3px_rgba(0,0,0,0.5)]">
          <li role="menuitem" className="h-6 pl-[34px] leading-[26px]">Stretch</li>
          <li role="menuitem" className="h-6 bg-[#91c9f7] pl-[34px] leading-[26px]">Lengthen</li>
        </ul>
        <div className="absolute bottom-0 right-[83px] w-[283px] whitespace-nowrap text-[#858a8f]">
          <p className="text-2xl leading-8">Activate Windows</p>
          <p className="pb-2 text-[17px] leading-[26px]">Go to Settings to activate Windows.</p>
        </div>
        <form className="absolute bottom-0 left-[396px] flex h-8 w-[1096px] items-center rounded-sm bg-[#282f3d]" onSubmit={(e) => e.preventDefault()}>
          <Svg w={8} h={22} className="ml-1"><path d="M2 0V22M6 0V22" stroke="#b8b8b8" strokeWidth="2" strokeDasharray="2 2" /></Svg>
          <IconButton label="Close command line" className="ml-[7px]"><Svg w={12} h={12}><path d="M1 1L11 11M11 1L1 11" stroke="#b8b8b8" strokeWidth="2" /></Svg></IconButton>
          <IconButton label="Customize command line" className="ml-4"><Svg><path d="M2 18L12 8" stroke="#b8b8b8" strokeWidth="4" strokeLinecap="round" /><path d="M15 1Q10 1 10 6 10 10 14 10 18 10 19 5L15 7 13 5Z" fill="#b8b8b8" /></Svg></IconButton>
          <div className="ml-[5px] flex h-full flex-1 items-center rounded-sm bg-[#bcbec0] px-[5px]">
            <Svg w={20} h={16}><path d="M1 1H19V15H1Z" stroke="#6b6b6b" strokeWidth="2" /><path d="M0 0H20V4H0Z" fill="#55575a" /><path d="M3 7L6 9 3 11M8 12H13" stroke="#55575a" /></Svg>
            <Svg w={10} h={6} className="ml-[2px]"><path d="M0 0H10L5 6Z" fill="#4b4e52" /></Svg>
            <input aria-label="Command" placeholder="Type a command" className="ml-[9px] h-full flex-1 bg-transparent font-['DejaVu_Sans_Mono'] text-sm italic placeholder:text-[#686b70]" />
            <Svg w={9} h={5}><path d="M0 5H9L5 0Z" fill="#4b4e52" /></Svg>
          </div>
        </form>
      </div>
    </main>
  );
}

/* ---------- layout tabs and status bar ---------- */

function StatusCell({ label, width, active = false, caret = false, children }: Kids & { label: string; width: string; active?: boolean; caret?: boolean }) {
  return (
    <button type="button" aria-label={label} className={`flex h-[30px] shrink-0 items-center justify-center ${caret ? "gap-3" : ""} ${width} ${active ? "bg-[#5f8fc4]" : "bg-[#3b4453]"}`}>
      {children}
      {caret && <Caret w={10} h={6} />}
    </button>
  );
}

const Compass = ({ fill = L }: { fill?: string }) => <path d="M10 0L13 11 19 17V20L13 17 10 14 7 17 1 20V17L7 11Z" fill={fill} />;

function BottomBar() {
  return (
    <footer className="flex h-9 bg-[#222933] pl-5 text-sm text-[#f2f2f2]">
      <div className="flex h-[30px] items-center">
        <IconButton label="Layouts menu"><Burger /></IconButton>
        <button type="button" className="ml-[11px] h-[30px] w-[86px] bg-[#3b4453] pl-px font-bold [clip-path:polygon(12px_0,100%_0,calc(100%-12px)_100%,0_100%)]">Model</button>
        <button type="button" className="ml-[9px] w-[60px] text-left">Layout1</button>
        <span className="ml-[3px]"><Slash /></span>
        <button type="button" className="ml-[10px] w-[60px] text-left">Layout2</button>
        <span className="ml-[3px]"><Slash /></span>
        <IconButton label="New layout" className="ml-[13px]"><Plus /></IconButton>
        <span className="ml-3"><Slash /></span>
      </div>
      <div className="ml-auto flex items-start pr-[2px] pt-[2px]">
        <button type="button" className="mr-1 h-[30px] w-[59px] bg-[#3b4453]">MODEL</button>
        <StatusCell label="Grid" width="w-7" active><Svg><path d="M5.500 0V20M10.500 0V20M15.500 0V20M0 5.500H20M0 10.500H20M0 15.500H20" stroke="#fff" /></Svg></StatusCell>
        <StatusCell label="Snap" width="w-[51px] mr-1" caret><Svg w={16} h={16}><path d="M0 1H16M0 6H16M0 10H16M0 15H16" stroke={L} strokeWidth="2" strokeDasharray="2 3 2 2 2 3 2 0" /></Svg></StatusCell>
        <StatusCell label="Ortho" width="w-7" active><Svg><path d="M0.500 0V19.500H20M1 13.500H6.500V19" stroke="#fff" /></Svg></StatusCell>
        <StatusCell label="Polar" width="w-[51px]" caret><Svg><circle cx="8" cy="11" r="7" stroke={L} /><path d="M8 11L16 2M8 11H20" stroke={L} /></Svg></StatusCell>
        <StatusCell label="Isometric" width="w-[50px] mr-[2px]" caret><Svg w={16} h={20}><path d="M8 0V20" stroke="#4caf68" /><path d="M0 2L16 18" stroke="#c65a5a" /><path d="M6 8H10V12H6Z" stroke={L} /></Svg></StatusCell>
        <StatusCell label="Object tracking" width="w-[28px] mr-[2px]" active><Svg><path d="M15 3L1 18H20" stroke="#fff" /><circle cx="8" cy="10" r="2" fill="#fff" /></Svg></StatusCell>
        <StatusCell label="Object snap" width="w-7" active><Svg><path d="M6 3H19V20H2V6" stroke="#fff" /><path d="M1 1H5V5H1Z" stroke="#fff" /></Svg></StatusCell>
        <StatusCell label="Snap options" width="w-[22px] mr-[3px]"><Caret w={10} h={6} /></StatusCell>
        <StatusCell label="Annotation visibility" width="w-7" active><Svg><Compass fill="#fff" /><circle cx="17" cy="4" r="3" stroke="#fff" /></Svg></StatusCell>
        <StatusCell label="Auto scale" width="w-8"><Svg><Compass /><path d="M16 0L13 4H16L14 8 19 3H16Z" fill={L} /></Svg></StatusCell>
        <StatusCell label="Annotation scale" width="w-7"><Svg><Compass /></Svg></StatusCell>
        <button type="button" className="mr-[3px] flex h-[30px] w-[43px] items-center justify-center gap-[5px] bg-[#3b4453] text-[13px]">1:1<Caret w={10} h={6} /></button>
        <StatusCell label="Workspace" width="w-[50px] mr-px" caret>
          <Svg><g transform="translate(10 10)" fill={L}>{[0, 45, 90, 135].map((a) => <rect key={a} x="-2" y="-10" width="4" height="20" transform={`rotate(${a})`} />)}<circle r="7" /><circle r="3" fill="#3b4453" /></g></Svg>
        </StatusCell>
        <StatusCell label="Annotation monitor" width="w-[30px] mr-[3px]"><Svg><path d="M10 0V20M0 10H20" stroke={L} strokeWidth="2" /></Svg></StatusCell>
        <StatusCell label="Isolate objects" width="w-[30px] mr-[3px]"><Svg><path d="M1 1H8V8H1ZM8 12L12 19H4Z" stroke={L} /><circle cx="15" cy="8" r="4" stroke={L} /></Svg></StatusCell>
        <StatusCell label="Hardware" width="w-[34px] mr-[3px]"><Svg w={24} h={24}><circle cx="11" cy="10" r="10" fill="#2663b3" /><path d="M0 12H10V21H0Z" fill="#f5b32a" /><path d="M5 0L7 4 11 6 7 8 5 12 3 8 0 6 3 4Z" fill="#dcecff" /><path d="M10 17L15 22 23 12" stroke="#4bc05d" strokeWidth="3" /></Svg></StatusCell>
        <StatusCell label="Clean screen" width="w-[30px] mr-[2px]"><Svg><path d="M1 3H19V17H1Z" stroke={L} /><path d="M12 5H17V10ZM3 10V15H8Z" fill={L} /></Svg></StatusCell>
        <StatusCell label="Customization" width="w-[30px]"><Burger /></StatusCell>
      </div>
    </footer>
  );
}

/* ---------- taskbar ---------- */

function TaskItem({ label, width, active = false, running = true, children }: Kids & { label: string; width: string; active?: boolean; running?: boolean }) {
  return (
    <button type="button" aria-label={label} className={`flex h-[50px] shrink-0 items-center justify-center border-b-[3px] ${width} ${running ? "border-[#7fd6d3]" : "border-transparent"} ${active ? "bg-[#6b6b6b]" : ""}`}>
      {children}
    </button>
  );
}

function Taskbar() {
  return (
    <div className="flex h-[50px] items-center bg-[#474747] text-white">
      <TaskItem label="Start menu" width="w-[60px]" running={false}><Svg><path d="M0 3L9 2V9H0ZM10 2L20 0V9H10ZM0 10H9V18L0 17ZM10 10H20V20L10 18Z" fill="#fff" /></Svg></TaskItem>
      <TaskItem label="Search" width="w-[60px]" running={false}><Svg w={28} h={28}><circle cx="17" cy="11" r="10" stroke="#fff" strokeWidth="2" /><path d="M10 18L1 27" stroke="#fff" strokeWidth="3" /></Svg></TaskItem>
      <TaskItem label="Task view" width="w-[60px]" running={false}><Svg><path d="M1 0V4H13V0M1 20V16H13V20M1 7H13V14H1ZM18 0V4M18 11V20" stroke="#fff" /><path d="M17 6H20V10H17Z" fill="#fff" /></Svg></TaskItem>
      <TaskItem label="Chrome" width="ml-[9px] w-[51px]">
        <Svg w={34} h={34}>
          <circle cx="16" cy="15" r="15" fill="#fbc117" /><path d="M16 15L3 7.500A15 15 0 0 1 29 7.500H16Z" fill="#e33b2e" /><path d="M3 7.500A15 15 0 0 0 16 30L22 19 9 18Z" fill="#2ba24c" />
          <circle cx="16" cy="15" r="7" fill="#fff" /><circle cx="16" cy="15" r="5" fill="#3b7de8" /><circle cx="24" cy="23" r="9" fill="#94bccb" /><path d="M21 15L26 19 24 32 19 29Z" fill="#4c5f73" /><path d="M26 17Q33 23 27 30" stroke="#c3b7e8" strokeWidth="2" />
        </Svg>
      </TaskItem>
      <TaskItem label="File Explorer" width="ml-[11px] w-[51px]">
        <Svg w={28} h={24}><path d="M0 0H11L13 3H27V8H0Z" fill="#e8a200" /><path d="M0 4H28V23H0Z" fill="#ffd258" /><path d="M5 12H23V24H18V18H10V24H5Z" fill="#3793d8" /></Svg>
      </TaskItem>
      <TaskItem label="AutoCAD" width="ml-[6px] w-[61px]" active>
        <Svg w={30} h={31}>
          <path d="M1 2L6 0V22L1 24Z" fill="#ff5b86" /><path d="M6 0H26V21H6Z" fill="#e3104c" /><path d="M26 2L28 4V30H4V21H26Z" fill="#7c0f2e" />
          <text x="16" y="17" textAnchor="middle" fontSize="17" fontWeight="700" fill="#fff" fontFamily="Open Sans, sans-serif">A</text>
          <text x="16" y="28" textAnchor="middle" fontSize="7" fontWeight="700" fill="#fff" fontFamily="Open Sans, sans-serif">CAD</text>
        </Svg>
      </TaskItem>
      <TaskItem label="Capture tool" width="ml-[6px] w-[51px]">
        <Svg w={26} h={30}>
          <circle cx="7" cy="5" r="5" fill="#f4f4f4" /><circle cx="19" cy="5" r="5" fill="#f4f4f4" /><path d="M8 4H18V9H8Z" fill="#111" /><circle cx="2" cy="16" r="2" fill="#efe3cb" /><circle cx="24" cy="16" r="2" fill="#efe3cb" />
          <path d="M3 26H11V29H3ZM15 26H23V29H15Z" fill="#f6b81c" /><circle cx="13" cy="16" r="11" fill="#0c7ff2" /><path d="M9 9V20H18M6 12H17V23" stroke="#fff" strokeWidth="2" />
        </Svg>
      </TaskItem>
      <div className="ml-auto flex h-full items-center">
        <IconButton label="Get help" className="mr-[209px]">
          <Svg w={30} h={28}><circle cx="14" cy="14" r="12" fill="#0f98d8" stroke="#fff" strokeWidth="3" /><text x="14" y="21" textAnchor="middle" fontSize="20" fontWeight="700" fill="#fff" fontFamily="Open Sans, sans-serif">?</text><circle cx="24" cy="20" r="6" fill="#f8b324" /><path d="M24 16V18M24 19V24" stroke="#fff" strokeWidth="2" /></Svg>
        </IconButton>
        <IconButton label="News"><Svg w={30} h={20}><path d="M1 1H26V4H29V19H1Z" stroke="#fff" strokeWidth="2" /><path d="M5 8H12V15H5Z" stroke="#fff" strokeWidth="2" /><path d="M4 5H23" stroke="#fff" strokeWidth="2" /><path d="M15 8.500H23M15 11.500H23M15 15.500H23M26.500 4V16" stroke="#fff" /></Svg></IconButton>
        <IconButton label="Hidden icons" className="ml-8"><Svg w={16} h={10}><path d="M0 9L8 1 16 9" stroke="#fff" /></Svg></IconButton>
        <IconButton label="Battery" className="ml-3"><Svg w={21} h={16}><path d="M5 4H18V14H5Z" stroke="#fff" /><path d="M7 6H17V12H7Z" fill="#fff" /><path d="M19 7H21V11H19ZM0 2H5V6H0Z" fill="#fff" /><path d="M1 0V2M4 0V2M2 6V9H5" stroke="#fff" /></Svg></IconButton>
        <IconButton label="Network" className="ml-3"><Svg w={17} h={16}><path d="M1 16Q1 1 16 1M5 16Q5 5 16 5M9 16Q9 9 16 9" stroke="#cfcfcf" /><circle cx="14" cy="14" r="2" fill="#fff" /></Svg></IconButton>
        <IconButton label="Volume" className="ml-[11px]"><Svg w={20} h={16}><path d="M1 5H4L8 1V15L4 11H1Z" stroke="#fff" /><path d="M11 6Q12 8 11 10" stroke="#fff" /><path d="M13 3Q16 8 13 13M16 1Q21 8 16 15" stroke="#8a8a8a" /></Svg></IconButton>
        <span className="ml-[11px] w-[17px] text-center text-2xl leading-8">A</span>
        <span className="ml-[18px] flex h-5 w-5 items-center justify-center bg-white text-base leading-5 text-black">한</span>
        <time className="ml-[23px] w-[76px] whitespace-nowrap text-center text-sm leading-[22px]" dateTime="2023-10-25T21:26">
          <span className="block">오후 9:26</span>
          <span className="block">2023-10-25</span>
        </time>
        <IconButton label="Notifications" className="ml-[22px]">
          <Svg w={31} h={31}><path d="M0 5H20V20H12L8 25V20H0Z" fill="#fff" /><path d="M4 9H16M4 12H16M4 15H12" stroke="#474747" /><circle cx="20" cy="24" r="10" fill="#474747" stroke="#8b8b8b" /><text x="20" y="29" textAnchor="middle" fontSize="14" fill="#fff" fontFamily="Open Sans, sans-serif">1</text></Svg>
        </IconButton>
        <span className="ml-[14px] mr-1 h-full w-px bg-[#8a8a8a]" />
      </div>
    </div>
  );
}

export default function App() {
  return (
    <div className="flex h-screen flex-col overflow-hidden bg-[#222933] font-['Open_Sans','Noto_Sans_CJK_KR',sans-serif]">
      <TitleBar />
      <RibbonTabs />
      <Ribbon />
      <FileTabs />
      <div className="h-[5px] bg-[#3b4453]" />
      <Workspace />
      <div className="h-[5px] bg-[#3b4453]" />
      <BottomBar />
      <Taskbar />
    </div>
  );
}
